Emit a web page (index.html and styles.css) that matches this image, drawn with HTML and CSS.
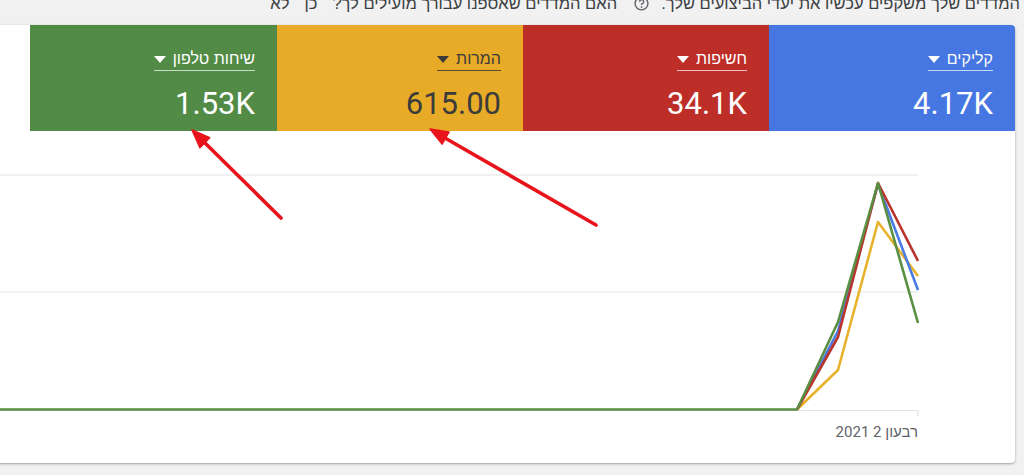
FILE: index.html
```html
<!DOCTYPE html>
<html lang="he">
<head>
<meta charset="utf-8">
<link rel="stylesheet" href="styles.css">
</head>
<body>
<div class="notice" dir="rtl">
  <span class="msg">המדדים שלך משקפים עכשיו את יעדי הביצועים שלך.</span>
  <svg class="help" width="15" height="15" viewBox="0 0 14 14"><circle cx="7" cy="7" r="6" fill="none" stroke="#5f6368" stroke-width="1.3"/><path d="M5.2 5.4a1.9 1.9 0 1 1 2.6 1.7c-.5.3-.8.6-.8 1.3" fill="none" stroke="#5f6368" stroke-width="1.3"/><circle cx="7" cy="10.2" r=".8" fill="#5f6368"/></svg>
  <span class="msg q">האם המדדים שאספנו עבורך מועילים לך?</span>
  <span class="msg opt">כן</span>
  <span class="msg opt">לא</span>
</div>

<div class="card">
  <div class="tiles" dir="rtl">
    <div class="tile blue">
      <div class="label"><span>קליקים</span><i class="caret"></i></div>
      <div class="value">4.17K</div>
    </div>
    <div class="tile red">
      <div class="label"><span>חשיפות</span><i class="caret"></i></div>
      <div class="value">34.1K</div>
    </div>
    <div class="tile yellow">
      <div class="label"><span>המרות</span><i class="caret"></i></div>
      <div class="value">615.00</div>
    </div>
    <div class="tile green">
      <div class="label"><span>שיחות טלפון</span><i class="caret"></i></div>
      <div class="value">1.53K</div>
    </div>
  </div>
  <div class="chart">
    <svg width="1215" height="332" viewBox="-200 131 1215 332">
      <g stroke="#e3e3e3" stroke-width="1.2">
        <line x1="-170" y1="175" x2="918" y2="175"/>
        <line x1="-170" y1="292" x2="918" y2="292"/>
        <line x1="-170" y1="410.5" x2="918" y2="410.5"/>
        <line x1="918" y1="410" x2="918" y2="416"/>
      </g>
      <g fill="none" stroke-width="2.6" stroke-linejoin="round">
        <polyline stroke="#e8b22c" points="797,409.5 838,370 878,222 918,276"/>
        <polyline stroke="#4a7be4" points="797,409.5 838,331 878,184 918,290"/>
        <polyline stroke="#b8352e" points="797,409.5 838,337 878,183 918,261"/>
        <polyline stroke="#5a8f42" points="-170,409.5 797,409.5 838,322 878,183 918,323"/>
      </g>
      <text class="axis" x="918" y="437" direction="rtl" text-anchor="start">רבעון 2 2021</text>
    </svg>
  </div>
</div>

<svg class="annot" width="1024" height="475" viewBox="0 0 1024 475">
  <g stroke="#e8141b" stroke-width="3.6" stroke-linecap="round">
    <line x1="281" y1="218" x2="204" y2="142"/>
    <line x1="596" y1="225" x2="445" y2="138"/>
  </g>
  <g fill="#e8141b" stroke="#e8141b" stroke-width="1.5" stroke-linejoin="round">
    <polygon points="192,130 209.7,137.7 199.9,147.7"/>
    <polygon points="430,129 449.1,131.9 442.1,144.1"/>
  </g>
</svg>
</body>
</html>
```

FILE: styles.css
```css
html, body {
  margin: 0;
  padding: 0;
}
body {
  background: #f1f1f1;
  width: 1024px;
  height: 475px;
  overflow: hidden;
  position: relative;
  font-family: Roboto, "Liberation Sans", Arial, sans-serif;
}
.notice {
  display: flex;
  align-items: center;
  gap: 9px;
  margin-top: -6px;
  height: 18px;
  padding-right: 4px;
  font-family: "Liberation Sans", Arial, sans-serif;
  font-size: 16.5px;
  line-height: 18px;
  color: #3c4043;
  white-space: nowrap;
}
.notice .help {
  margin: 0 3px 0 8px;
  flex: none;
}
.notice .opt {
  margin-right: 6px;
}
.card {
  margin-top: 13px;
  margin-left: -200px;
  width: 1215px;
  height: 438px;
  background: #fff;
  border-radius: 0 4px 4px 0;
  box-shadow: 0 1px 3px rgba(0, 0, 0, 0.28), 0 1px 1px rgba(0, 0, 0, 0.08);
  overflow: hidden;
}
.tiles {
  display: flex;
  height: 106px;
}
.tile {
  width: 246px;
  flex: none;
  box-sizing: border-box;
  padding: 24px 22px 0 0;
  color: #fff;
  text-align: right;
}
.tile.blue { background: #4676e1; width: 246px; }
.tile.red { background: #bd2e28; }
.tile.yellow { background: #e8ab27; color: #3b3b3b; }
.tile.green { background: #528b46; width: 247px; }
.label {
  display: inline-flex;
  align-items: center;
  gap: 7px;
  font-family: "Liberation Sans", Arial, sans-serif;
  font-size: 16px;
  line-height: 20px;
  padding-bottom: 1px;
  border-bottom: 1px solid rgba(255, 255, 255, 0.7);
}
.yellow .label {
  border-bottom-color: rgba(40, 40, 40, 0.75);
}
.caret {
  width: 0;
  height: 0;
  border-left: 6px solid transparent;
  border-right: 6px solid transparent;
  border-top: 7px solid currentColor;
  margin-top: 1px;
}
.value {
  margin-top: 15px;
  font-size: 31px;
  line-height: 36px;
  font-weight: 400;
}
.chart svg {
  display: block;
}
.axis {
  font-family: Roboto, "Liberation Sans", Arial, sans-serif;
  font-size: 15px;
  fill: #5f6368;
}
.annot {
  position: absolute;
  left: 0;
  top: 0;
  pointer-events: none;
}
```
